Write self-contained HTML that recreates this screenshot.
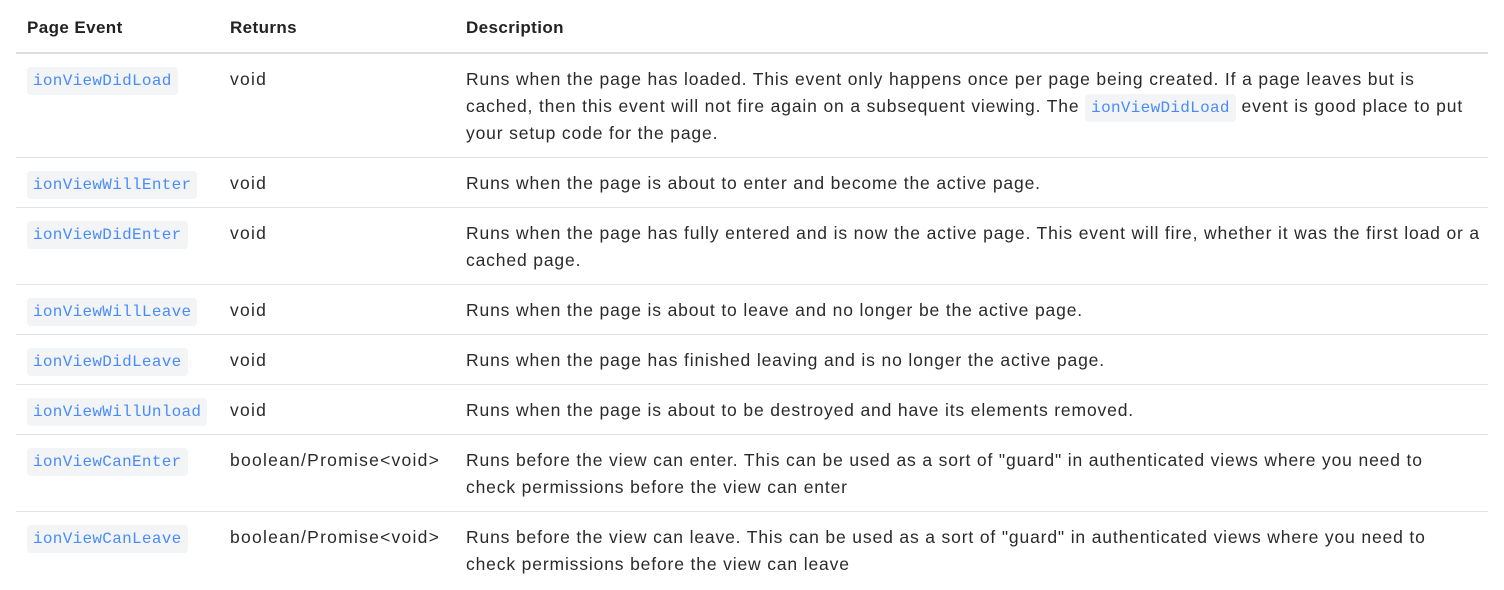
<!DOCTYPE html>
<html><head><style>
body{margin:0;background:#fff;width:1504px;height:590px;overflow:hidden;font-family:"Liberation Sans",sans-serif;color:#222;}
table{position:absolute;left:16px;top:0;width:1472px;border-collapse:collapse;table-layout:fixed;}
th{font-weight:bold;font-size:17px;line-height:20px;text-align:left;padding:18px 11px 14px;border-bottom:2px solid #dedede;color:#222;letter-spacing:0.4px}
td{font-size:17.5px;line-height:27px;padding:12px 11px 10px;border-bottom:1px solid #e2e2e2;vertical-align:top;white-space:nowrap;letter-spacing:0.85px;color:#2a2a2a}
td.r{letter-spacing:1.25px}
code{font-family:"Liberation Mono",monospace;font-size:16px;line-height:17px;letter-spacing:0.3px;color:#4a8bfc;background:#f3f4f5;border-radius:4px;padding:5px 6px;}
</style></head><body>
<table>
<colgroup><col style="width:203px"><col style="width:236px"><col></colgroup>
<tr><th>Page Event</th><th>Returns</th><th>Description</th></tr>
<tr><td><code>ionViewDidLoad</code></td><td class="r">void</td><td>Runs when the page has loaded. This event only happens once per page being created. If a page leaves but is<br>cached, then this event will not fire again on a subsequent viewing. The <code>ionViewDidLoad</code> event is good place to put<br>your setup code for the page.</td></tr>
<tr><td><code>ionViewWillEnter</code></td><td class="r">void</td><td>Runs when the page is about to enter and become the active page.</td></tr>
<tr><td><code>ionViewDidEnter</code></td><td class="r">void</td><td>Runs when the page has fully entered and is now the active page. This event will fire, whether it was the first load or a<br>cached page.</td></tr>
<tr><td><code>ionViewWillLeave</code></td><td class="r">void</td><td>Runs when the page is about to leave and no longer be the active page.</td></tr>
<tr><td><code>ionViewDidLeave</code></td><td class="r">void</td><td>Runs when the page has finished leaving and is no longer the active page.</td></tr>
<tr><td><code>ionViewWillUnload</code></td><td class="r">void</td><td>Runs when the page is about to be destroyed and have its elements removed.</td></tr>
<tr><td><code>ionViewCanEnter</code></td><td class="r">boolean/Promise&lt;void&gt;</td><td>Runs before the view can enter. This can be used as a sort of "guard" in authenticated views where you need to<br>check permissions before the view can enter</td></tr>
<tr><td style="border:none"><code>ionViewCanLeave</code></td><td class="r" style="border:none">boolean/Promise&lt;void&gt;</td><td style="border:none">Runs before the view can leave. This can be used as a sort of "guard" in authenticated views where you need to<br>check permissions before the view can leave</td></tr>
</table>
</body></html>
